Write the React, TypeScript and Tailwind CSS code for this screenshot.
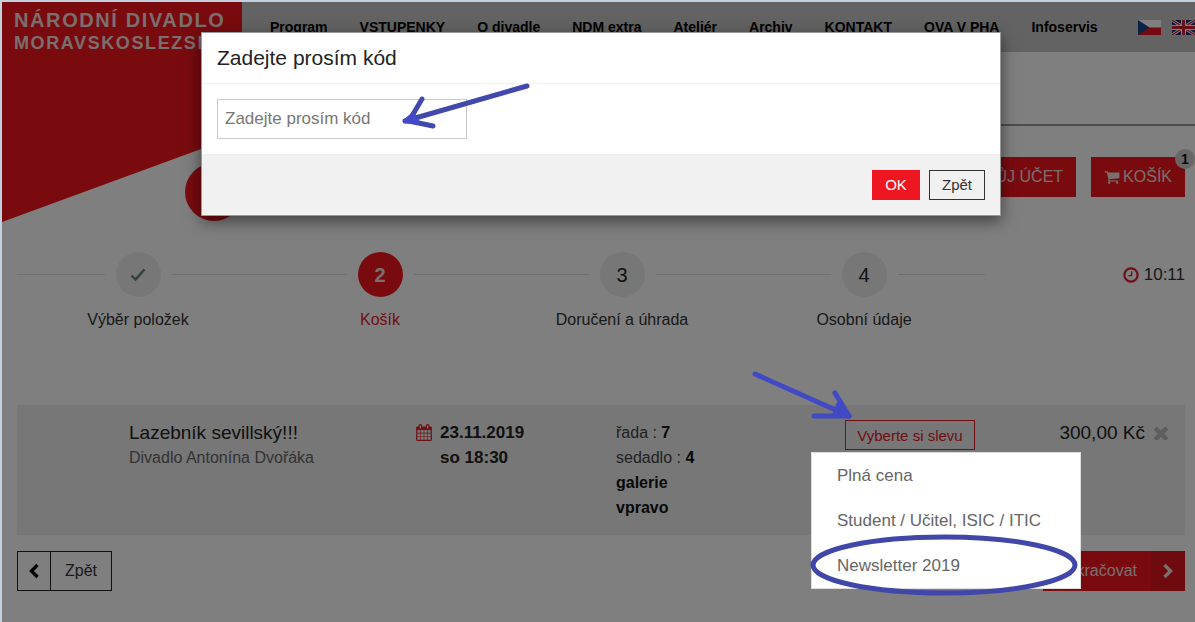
import { useState, type ReactNode } from 'react';

const navItems = ['Program', 'VSTUPENKY', 'O divadle', 'NDM extra', 'Ateliér', 'Archiv', 'KONTAKT', 'OVA V PHA', 'Infoservis'];

const steps = [
    { label: 'Výběr položek', mark: 'check' },
    { label: 'Košík', mark: '2', active: true },
    { label: 'Doručení a úhrada', mark: '3' },
    { label: 'Osobní údaje', mark: '4' },
];

const discounts = ['Plná cena', 'Student / Učitel, ISIC / ITIC', 'Newsletter 2019'];

function Glyph({ d, box = '0 0 1792 1792', className }: { d: string; box?: string; className: string }) {
    return (
        <svg viewBox={box} className={className} fill="currentColor" aria-hidden="true">
            <path d={d} />
        </svg>
    );
}

const cartPath = 'M704 1536q0 52-38 90t-90 38-90-38-38-90 38-90 90-38 90 38 38 90zm896 0q0 52-38 90t-90 38-90-38-38-90 38-90 90-38 90 38 38 90zm128-1088v512q0 24-16.5 42.5t-40.5 21.5l-1044 122q13 60 13 70 0 16-24 64h920q26 0 45 19t19 45-19 45-45 19h-1024q-26 0-45-19t-19-45q0-11 8-31.5t16-36 21.5-40 15.5-29.5l-177-823h-204q-26 0-45-19t-19-45 19-45 45-19h256q16 0 28.5 6.5t19.5 15.5 13 24.5 8 26 5.5 29.5 4.5 26h1201q26 0 45 19t19 45z';
const clockPath = 'M1024 544v448q0 14-9 23t-23 9h-320q-14 0-23-9t-9-23v-64q0-14 9-23t23-9h224v-352q0-14 9-23t23-9h64q14 0 23 9t9 23zm416 352q0-148-73-273t-198-198-273-73-273 73-198 198-73 273 73 273 198 198 273 73 273-73 198-198 73-273zm224 0q0 209-103 385.5t-279.5 279.5-385.5 103-385.5-103-279.5-279.5-103-385.5 103-385.5 279.5-279.5 385.5-103 385.5 103 279.5 279.5 103 385.5z';
const timesPath = 'M1490 1322q0 40-28 68l-136 136q-28 28-68 28t-68-28l-294-294-294 294q-28 28-68 28t-68-28l-136-136q-28-28-28-68t28-68l294-294-294-294q-28-28-28-68t28-68l136-136q28-28 68-28t68 28l294 294 294-294q28-28 68-28t68 28l136 136q28 28 28 68t-28 68l-294 294 294 294q28 28 28 68z';
const calendarPath = 'M128 1664h288v-288h-288v288zM480 1664h320v-288h-320v288zM128 1312h288v-320h-288v320zM480 1312h320v-320h-320v320zM128 928h288v-288h-288v288zM864 1664h320v-288h-320v288zM480 928h320v-288h-320v288zM1248 1664h288v-288h-288v288zM864 1312h320v-320h-320v320zM512 448v-288q0-13-9.5-22.5t-22.5-9.5h-64q-13 0-22.5 9.5t-9.5 22.5v288q0 13 9.5 22.5t22.5 9.5h64q13 0 22.5-9.5t9.5-22.5zM1248 1312h288v-320h-288v320zM864 928h320v-288h-320v288zM1248 928h288v-288h-288v288zM1280 448v-288q0-13-9.5-22.5t-22.5-9.5h-64q-13 0-22.5 9.5t-9.5 22.5v288q0 13 9.5 22.5t22.5 9.5h64q13 0 22.5-9.5t9.5-22.5zM1664 384v1280q0 52-38 90t-90 38h-1408q-52 0-90-38t-38-90v-1280q0-52 38-90t90-38h128v-96q0-66 47-113t113-47h64q66 0 113 47t47 113v96h384v-96q0-66 47-113t113-47h64q66 0 113 47t47 113v96h128q52 0 90 38t38 90z';

function Chevron({ d }: { d: string }) {
    return (
        <svg viewBox="0 0 12 16" className="w-3 h-4" fill="none" stroke="currentColor" strokeWidth="3.4" aria-hidden="true">
            <path d={d} />
        </svg>
    );
}

function Flags() {
    return (
        <div className="ml-auto flex gap-[11px] shrink-0">
            <a href="#cs" aria-label="Čeština">
                <svg viewBox="0 0 23 15" className="w-[23px] h-[15px]">
                    <path fill="#fff" d="M0 0h23v8H0z" />
                    <path fill="#e3171f" d="M0 7.5h23V15H0z" />
                    <path fill="#12458b" d="M0 0l11.5 7.5L0 15z" />
                </svg>
            </a>
            <a href="#en" aria-label="English">
                <svg viewBox="0 0 23 15" className="w-[23px] h-[15px]">
                    <path fill="#1c2a72" d="M0 0h23v15H0z" />
                    <path stroke="#fff" strokeWidth="3" d="M0 0l23 15M23 0L0 15" />
                    <path stroke="#d01c2c" strokeWidth="1.2" d="M0 0l23 15M23 0L0 15" />
                    <path stroke="#fff" strokeWidth="5" d="M11.5 0v15M0 7.5h23" />
                    <path stroke="#d01c2c" strokeWidth="3" d="M11.5 0v15M0 7.5h23" />
                </svg>
            </a>
        </div>
    );
}

function Header() {
    return (
        <header className="relative">
            <div className="h-[50px] bg-[#c6c6c6] flex items-center pl-[268px]">
                <nav className="flex gap-8 text-sm font-bold text-black whitespace-nowrap">
                    {navItems.map((item) => (
                        <a key={item} href="#menu">{item}</a>
                    ))}
                </nav>
                <Flags />
            </div>
            <div className="h-[74px] border-b-2 border-[#9a9a9a]" />

            {/* Logo flag hangs below the header */}
            <div className="absolute left-0 top-0 w-60 h-[220px] bg-[#f2171f] [clip-path:polygon(0_0,100%_0,100%_60%,0_100%)] pt-[7px] pl-3 leading-[23px] font-bold tracking-widest text-[#f6dcdc] whitespace-nowrap">
                <p className="text-xl leading-[23px]">NÁRODNÍ DIVADLO</p>
                <p className="text-lg leading-[23px]">MORAVSKOSLEZSKÉ</p>
            </div>
            <div className="absolute left-[183px] top-[161px] size-[58px] rounded-full bg-[#f2171f]" />
        </header>
    );
}

function StepLine() {
    return <span className="flex-1 h-px bg-[#dedede]" />;
}

function Stepper() {
    return (
        <div className="mt-[55px] flex">
            <ol className="flex-1 grid grid-cols-4">
                {steps.map((step) => (
                    <li key={step.label} className="text-center">
                        <div className="flex items-center gap-[11px]">
                            <StepLine />
                            <span className={step.active ? 'size-[45px] rounded-full flex items-center justify-center text-xl font-bold bg-[#f2171f] text-[#f6dcdc]' : 'size-[45px] rounded-full flex items-center justify-center text-xl bg-[#eeeeee] text-[#222222]'}>
                                {step.mark === 'check' ? (
                                    <svg viewBox="0 0 16 14" className="w-4 h-3.5" fill="none" stroke="#56857b" strokeWidth="2.4" aria-hidden="true">
                                        <path d="M1.5 7.5l4 4L14.5 1.5" />
                                    </svg>
                                ) : step.mark}
                            </span>
                            <StepLine />
                        </div>
                        <p className={step.active ? 'mt-[11px] text-[#e0202a]' : 'mt-[11px] text-[#333333]'}>{step.label}</p>
                    </li>
                ))}
            </ol>
            <div className="w-[200px] h-[45px] flex items-center justify-end gap-1 text-[17px] text-[#333333]">
                <Glyph d={clockPath} className="size-[18px] text-[#e0202a]" />
                10:11
            </div>
        </div>
    );
}

function DiscountPicker() {
    return (
        <div className="relative w-[130px]">
            <button type="button" className="w-full h-[30px] border border-[#e0202a] text-[15px] text-[#e0202a] whitespace-nowrap">
                Vyberte si slevu
            </button>
            <ul className="absolute z-20 -left-[34px] top-8 w-[270px] bg-white border border-[#dddddd] text-[17px] text-[#666666]">
                {discounts.map((item) => (
                    <li key={item}>
                        <button type="button" className="w-full h-[45px] pl-[25px] text-left whitespace-nowrap">{item}</button>
                    </li>
                ))}
            </ul>
            {/* Hand-drawn marks around the picker */}
            <svg viewBox="0 0 330 240" className="absolute z-20 -left-[94px] -top-[50px] w-[330px] h-60 max-w-none pointer-events-none" fill="none" stroke="#4149c4" strokeWidth="5" strokeLinecap="round" strokeLinejoin="round">
                <path d="M4 4L98 46M84 23L98 46L63 46" />
                <path d="M88 34L98 46L84 44z" fill="#4149c4" />
                <ellipse cx="193" cy="195" rx="131" ry="28" stroke="#4147a9" />
            </svg>
        </div>
    );
}

function CartRow() {
    return (
        <section className="mt-[73px] bg-[#eeeeee] py-[15px] pl-28 pr-4 grid grid-cols-[287fr_200fr_229fr_324fr] leading-[25px] text-[#444444]">
            <div>
                <h2 className="text-[19px] text-[#222222]">Lazebník sevillský!!!</h2>
                <p className="text-[#666666]">Divadlo Antonína Dvořáka</p>
            </div>
            <div className="flex gap-2 font-bold text-[17px] text-[#222222]">
                <Glyph d={calendarPath} box="0 0 1664 1792" className="mt-1 w-4 h-[17px] text-[#e0202a]" />
                <p>23.11.2019<br />so 18:30</p>
            </div>
            <div>
                <p>řada : <b className="text-[#111111]">7</b></p>
                <p>sedadlo : <b className="text-[#111111]">4</b></p>
                <p className="font-bold text-[#111111]">galerie</p>
                <p className="font-bold text-[#111111]">vpravo</p>
            </div>
            <div className="flex justify-between items-start">
                <DiscountPicker />
                <div className="flex items-center gap-2 text-[19px] text-[#222222]">
                    300,00 Kč
                    <button type="button" aria-label="Odebrat">
                        <Glyph d={timesPath} box="302 302 1188 1188" className="block w-4 h-3.5 text-[#bbbbbb]" />
                    </button>
                </div>
            </div>
        </section>
    );
}

function RedButton({ children }: { children: ReactNode }) {
    return (
        <button type="button" className="relative h-10 px-[13px] flex items-center gap-[3px] bg-[#f2171f] text-[#f6dcdc]">
            {children}
        </button>
    );
}

function CodeDialog() {
    const [code, setCode] = useState('');
    return (
        <div className="absolute inset-0 z-30 flex justify-center items-start pt-[30px] pl-[5px] pointer-events-none">
            <div role="dialog" aria-labelledby="code-title" className="relative w-[800px] bg-white border border-[#999999] shadow-[0_5px_15px_rgba(0,0,0,0.5)] pointer-events-auto">
                <h1 id="code-title" className="h-[51px] px-[15px] leading-[50px] border-b border-[#f1f1f1] text-[21px] text-[#222222]">Zadejte prosím kód</h1>
                <div className="p-[15px]">
                    <input
                        type="text"
                        aria-label="Zadejte prosím kód"
                        placeholder="Zadejte prosím kód"
                        value={code}
                        onChange={(e) => setCode(e.target.value)}
                        className="block w-[250px] h-10 px-[7px] border border-[#cccccc] text-[17px] text-[#333333] placeholder:text-[#777777]"
                    />
                </div>
                <div className="px-[15px] pt-4 pb-[15px] bg-[#f1f1f1] flex justify-end gap-[9px]">
                    <button type="button" className="w-12 h-[30px] bg-[#ed1621] text-[15px] text-white">OK</button>
                    <button type="button" className="w-14 h-[30px] border border-[#333333] text-[15px] text-[#333333]">Zpět</button>
                </div>
                <svg viewBox="0 0 130 50" className="absolute left-[199px] top-[48px] w-[130px] h-[50px] pointer-events-none" fill="none" stroke="#4349ac" strokeWidth="5" strokeLinecap="round" strokeLinejoin="round">
                    <path d="M126 5L4 40M21 18L8 40L32 45" />
                    <path d="M12 34L5 40L16 41z" fill="#4349c8" stroke="#4349c8" />
                </svg>
            </div>
        </div>
    );
}

export default function App() {
    return (
        <div className="relative min-h-screen overflow-hidden bg-white border-l-2 border-t-2 border-[#c3d2de] font-['Liberation_Sans',Arial,sans-serif] text-base">
            <Header />
            <main className="pl-[15px] pr-2.5 pt-[31px]">
                <div className="flex justify-end gap-[15px]">
                    <RedButton>MŮJ ÚČET</RedButton>
                    <RedButton>
                        <Glyph d={cartPath} className="size-4" />
                        KOŠÍK
                        <span className="absolute -right-2.5 -top-2 size-5 rounded-full bg-[#cfcfcf] text-[#111111] text-sm font-bold flex items-center justify-center">1</span>
                    </RedButton>
                </div>
                <Stepper />
                <CartRow />
                <div className="mt-4 flex justify-between">
                    <button type="button" className="h-10 flex items-stretch border border-[#222222] text-[#333333]">
                        <span className="w-[33px] flex items-center justify-center border-r border-[#222222] text-black">
                            <Chevron d="M9.5 2L3.5 8l6 6" />
                        </span>
                        <span className="px-3.5 flex items-center">Zpět</span>
                    </button>
                    <button type="button" className="h-10 flex items-stretch bg-[#f2171f] text-[#f6dcdc]">
                        <span className="px-3.5 flex items-center">Pokračovat</span>
                        <span className="w-[34px] flex items-center justify-center bg-[#de151d]">
                            <Chevron d="M2.5 2l6 6-6 6" />
                        </span>
                    </button>
                </div>
            </main>
            <div className="absolute inset-0 z-10 bg-black/50" />
            <CodeDialog />
        </div>
    );
}
